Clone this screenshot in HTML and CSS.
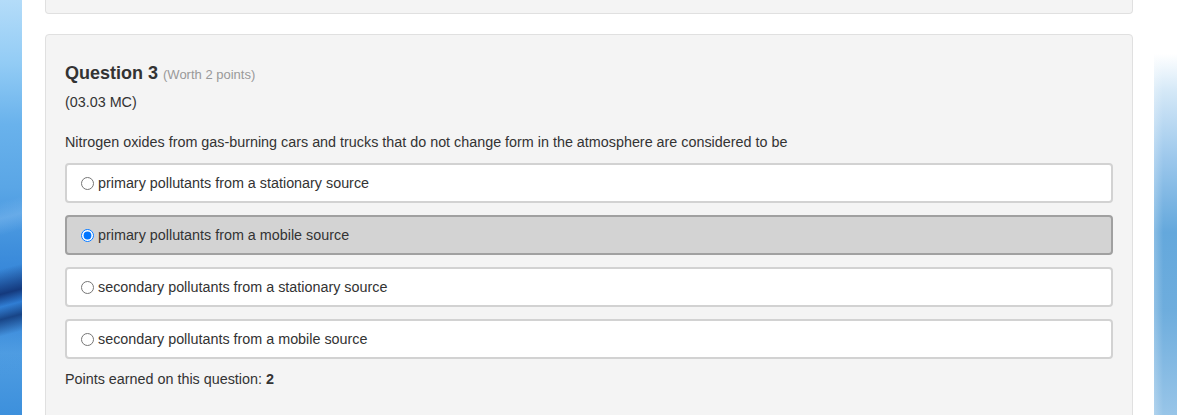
FILE: index.html
```html
<!DOCTYPE html>
<html>
<head>
<meta charset="utf-8">
<link rel="stylesheet" href="styles.css">
</head>
<body>
<div class="page">
  <div class="side side-left"></div>
  <main class="main">
    <div class="panel panel-prev"></div>
    <section class="panel question">
      <h2 class="q-title">Question 3 <span class="worth">(Worth 2 points)</span></h2>
      <div class="q-code">(03.03 MC)</div>
      <p class="q-text">Nitrogen oxides from gas-burning cars and trucks that do not change form in the atmosphere are considered to be</p>
      <div class="options">
        <label class="option"><input type="radio" name="q3"><span>primary pollutants from a stationary source</span></label>
        <label class="option selected"><input type="radio" name="q3" checked><span>primary pollutants from a mobile source</span></label>
        <label class="option"><input type="radio" name="q3"><span>secondary pollutants from a stationary source</span></label>
        <label class="option"><input type="radio" name="q3"><span>secondary pollutants from a mobile source</span></label>
      </div>
      <div class="points">Points earned on this question: <b>2</b></div>
    </section>
  </main>
  <div class="side side-right"></div>
</div>
</body>
</html>
```
FILE: styles.css
```css
html, body {
  margin: 0;
  padding: 0;
  height: 100%;
  overflow: hidden;
}
body {
  font-family: "Liberation Sans", Arial, sans-serif;
  color: #333;
  font-size: 14.35px;
  background: #fff;
}
.page {
  display: flex;
  height: 415px;
}
.side {
  flex: none;
}
.side-left {
  width: 22px;
  background:
    linear-gradient(165deg, rgba(255,255,255,0) 0%, rgba(255,255,255,0) 48%, rgba(150,200,245,0.35) 52%, rgba(255,255,255,0) 56%, rgba(255,255,255,0) 64%, rgba(15,45,110,0.85) 70%, rgba(40,110,200,0.2) 73%, rgba(10,40,100,0.7) 76%, rgba(60,140,220,0.1) 80%, rgba(120,180,240,0) 90%),
    linear-gradient(180deg, #b4dcf9 0%, #93ccf5 15%, #69b2ec 30%, #5aa6e6 45%, #3f8fdc 60%, #2f7fd6 72%, #4f9de2 85%, #3d90dc 100%);
}
.side-right {
  width: 23px;
  background:
    linear-gradient(90deg, rgba(255,255,255,0.25) 0%, rgba(255,255,255,0) 40%),
    linear-gradient(180deg, #ffffff 0%, #ffffff 13%, #d4e8f7 22%, #9dc8ec 38%, #64a8dc 56%, #6eaddd 75%, #98c5e8 100%);
}
.main {
  flex: none;
  width: 1132px;
  padding: 0 21px 0 23px;
  box-sizing: border-box;
  background: #fff;
}
.panel {
  background: #f4f4f4;
  border: 1px solid #e0e0e0;
  border-radius: 4px;
  box-sizing: border-box;
}
.panel-prev {
  height: 14px;
  border-top: none;
  border-top-left-radius: 0;
  border-top-right-radius: 0;
}
.question {
  margin-top: 20px;
  padding: 27px 19px 40px 19px;
  height: 400px;
}
.q-title {
  margin: 0;
  font-size: 18px;
  line-height: 22px;
  font-weight: bold;
  color: #333;
}
.worth {
  font-size: 13px;
  font-weight: normal;
  color: #999;
}
.q-code {
  margin-top: 6px;
  line-height: 20px;
}
.q-text {
  margin: 20px 0 0 0;
  line-height: 20px;
}
.options {
  margin-top: 11px;
  display: flex;
  flex-direction: column;
  gap: 12px;
}
.option {
  display: flex;
  align-items: center;
  height: 40px;
  box-sizing: border-box;
  background: #fff;
  border: 2px solid #d2d2d2;
  border-radius: 4px;
  padding-left: 14px;
  cursor: pointer;
}
.option.selected {
  background: #d3d3d3;
  border-color: #a0a0a0;
}
.option input {
  margin: 0 4px 0 0;
  width: 13px;
  height: 13px;
}
.points {
  margin-top: 10px;
  line-height: 20px;
}
```
